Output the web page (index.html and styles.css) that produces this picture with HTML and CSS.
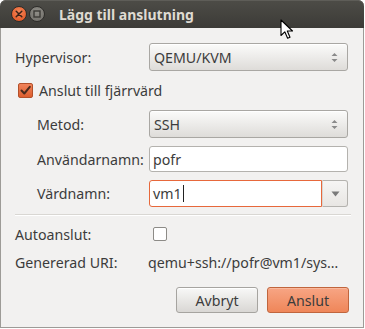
FILE: index.html
```html
<!DOCTYPE html>
<html lang="sv">
<head>
<meta charset="utf-8">
<title>Lägg till anslutning</title>
<link rel="stylesheet" href="styles.css">
</head>
<body>
<div class="window">
  <div class="titlebar">
    <span class="wbtn close"><svg width="8" height="8" viewBox="0 0 8 8"><path d="M1.2 1.2L6.8 6.8M6.8 1.2L1.2 6.8" stroke="#3a2218" stroke-width="1.5" stroke-linecap="round"/></svg></span>
    <span class="wbtn min"><svg width="8" height="8" viewBox="0 0 8 8"><rect x="1" y="1" width="6" height="6" fill="none" stroke="#3c3b37" stroke-width="1.4"/></svg></span>
    <span class="title">Lägg till anslutning</span>
  </div>
  <div class="content">
    <div class="row r-combo">
      <span class="label">Hypervisor:</span>
      <div class="combo"><span>QEMU/KVM</span>
        <svg class="updown" width="7" height="11" viewBox="0 0 7 11"><path d="M0.5 4L3.5 1L6.5 4Z M0.5 7L3.5 10L6.5 7Z" fill="#8a8a8a"/></svg>
      </div>
    </div>
    <div class="row r-check">
      <span class="check checked"><svg width="13" height="13" viewBox="0 0 13 13"><path d="M2.5 6.5L5.3 9.5L10.8 2.8" fill="none" stroke="#4a2a1c" stroke-width="2" stroke-linecap="round" stroke-linejoin="round"/></svg></span>
      <span class="check-text">Anslut till fjärrvärd</span>
    </div>
    <div class="row r-combo">
      <span class="label indent">Metod:</span>
      <div class="combo"><span>SSH</span>
        <svg class="updown" width="7" height="11" viewBox="0 0 7 11"><path d="M0.5 4L3.5 1L6.5 4Z M0.5 7L3.5 10L6.5 7Z" fill="#8a8a8a"/></svg>
      </div>
    </div>
    <div class="row r-entry">
      <span class="label indent">Användarnamn:</span>
      <div class="entry">pofr</div>
    </div>
    <div class="row r-entry2">
      <span class="label indent">Värdnamn:</span>
      <div class="entry-combo">
        <div class="entry focused">vm1<span class="caret"></span></div>
        <div class="drop"><svg width="9" height="6" viewBox="0 0 9 6"><path d="M0.5 0.5H8.5L4.5 5.5Z" fill="#7a7a7a"/></svg></div>
      </div>
    </div>
    <div class="sep"></div>
    <div class="row r-plain">
      <span class="label">Autoanslut:</span>
      <div class="ctrl"><span class="check"></span></div>
    </div>
    <div class="row r-plain">
      <span class="label">Genererad URI:</span>
      <div class="ctrl uri">qemu+ssh://pofr@vm1/sys…</div>
    </div>
    <div class="buttons">
      <button class="btn">Avbryt</button>
      <button class="btn primary">Anslut</button>
    </div>
  </div>
  <svg class="cursor" width="14" height="21" viewBox="0 0 14 21"><path d="M1 1V16.5L4.8 12.8L7.6 19.2L10 18.2L7.3 12H12.5Z" fill="#fff" stroke="#000" stroke-width="1.1" stroke-linejoin="round"/></svg>
</div>
</body>
</html>
```

FILE: styles.css
```css
* { box-sizing: border-box; }
html, body {
  margin: 0;
  padding: 0;
  background: #ffffff;
}
body {
  font-family: "Noto Sans", "DejaVu Sans", sans-serif;
  font-size: 14.2px;
  color: #3c3c3c;
}
.window {
  position: relative;
  width: 364px;
  height: 328px;
  display: flex;
  flex-direction: column;
}
.titlebar {
  height: 28px;
  flex: none;
  background: linear-gradient(#4d4c47, #3c3b37);
  border-radius: 6px 6px 0 0;
  display: flex;
  align-items: center;
  padding-left: 11px;
  box-shadow: inset 0 1px 0 #5e5d58;
}
.wbtn {
  width: 16px;
  height: 16px;
  border-radius: 50%;
  display: flex;
  align-items: center;
  justify-content: center;
  margin-right: 2px;
  flex: none;
}
.wbtn.close {
  background: radial-gradient(circle at 50% 35%, #f5875a, #df4f1c);
  border: 1px solid #2e2d2a;
}
.wbtn.min {
  background: radial-gradient(circle at 50% 35%, #908e88, #6e6c67);
  border: 1px solid #2e2d2a;
}
.title {
  margin-left: 12px;
  font-family: "Noto Sans", "DejaVu Sans", sans-serif;
  font-weight: bold;
  font-size: 14px;
  color: #dfdbd2;
}
.content {
  flex: 1;
  background: #f2f1f0;
  border: 1px solid #9d9b97;
  border-top: none;
  padding: 15px 14px 0 14px;
  display: flex;
  flex-direction: column;
}
.row {
  display: flex;
  align-items: center;
}
.label {
  width: 134px;
  flex: none;
  white-space: nowrap;
}
.label.indent { padding-left: 22px; }
.r-combo { height: 28px; }
.r-check { height: 39px; padding-left: 3px; }
.r-entry { height: 26px; margin-top: 8px; }
.r-entry2 { height: 27px; margin-top: 8px; }
.r-plain { height: 28px; }
.combo {
  width: 199px;
  height: 28px;
  border: 1px solid #a9a7a3;
  border-radius: 3px;
  background: linear-gradient(#fbfbfa, #dedcd9);
  box-shadow: inset 0 1px 0 #ffffff;
  display: flex;
  align-items: center;
  justify-content: space-between;
  padding: 0 9px 0 4px;
}
.entry {
  width: 199px;
  height: 26px;
  background: #ffffff;
  border: 1px solid #b4b2ae;
  border-radius: 3px;
  display: flex;
  align-items: center;
  padding-left: 3px;
}
.entry-combo {
  width: 199px;
  height: 27px;
  display: flex;
}
.entry.focused {
  width: 173px;
  height: 27px;
  border: 1px solid #e7683b;
  border-radius: 3px 0 0 3px;
}
.caret {
  display: inline-block;
  width: 1px;
  height: 17px;
  background: #222;
  margin-left: 1px;
}
.drop {
  width: 26px;
  height: 27px;
  border: 1px solid #b4b2ae;
  border-left: 1px solid #d8d6d2;
  border-radius: 0 3px 3px 0;
  background: linear-gradient(#f6f5f4, #e8e6e3);
  display: flex;
  align-items: center;
  justify-content: center;
}
.check {
  width: 14px;
  height: 14px;
  border: 1px solid #8d8b87;
  border-radius: 2px;
  background: #ffffff;
  display: inline-flex;
  align-items: center;
  justify-content: center;
  flex: none;
}
.check.checked {
  width: 15px;
  height: 15px;
  background: linear-gradient(#f0835a, #dd5e2e);
  border-color: #b3502a;
}
.check-text { margin-left: 6px; }
.ctrl { padding-left: 4px; display: flex; align-items: center; }
.uri { padding-left: 0; margin-left: -1px; white-space: nowrap; }
.sep {
  height: 1px;
  background: #d9d7d3;
  margin: 7px -2px 5px 0;
  box-shadow: 0 1px 0 #ffffff;
}
.buttons {
  margin-top: 11px;
  display: flex;
  justify-content: flex-end;
  gap: 9px;
}
.btn {
  width: 82px;
  height: 26px;
  font-family: inherit;
  font-size: 14.2px;
  color: #3c3c3c;
  border: 1px solid #a6a4a0;
  border-radius: 3px;
  background: linear-gradient(#f8f8f7, #d9d7d4);
  box-shadow: inset 0 1px 0 #fff;
  padding: 0;
}
.btn.primary {
  border-color: #c0653d;
  background: linear-gradient(#f7a584, #ef8659);
  box-shadow: inset 0 1px 0 #fab89c;
}
.cursor {
  position: absolute;
  left: 280px;
  top: 19px;
}
```
